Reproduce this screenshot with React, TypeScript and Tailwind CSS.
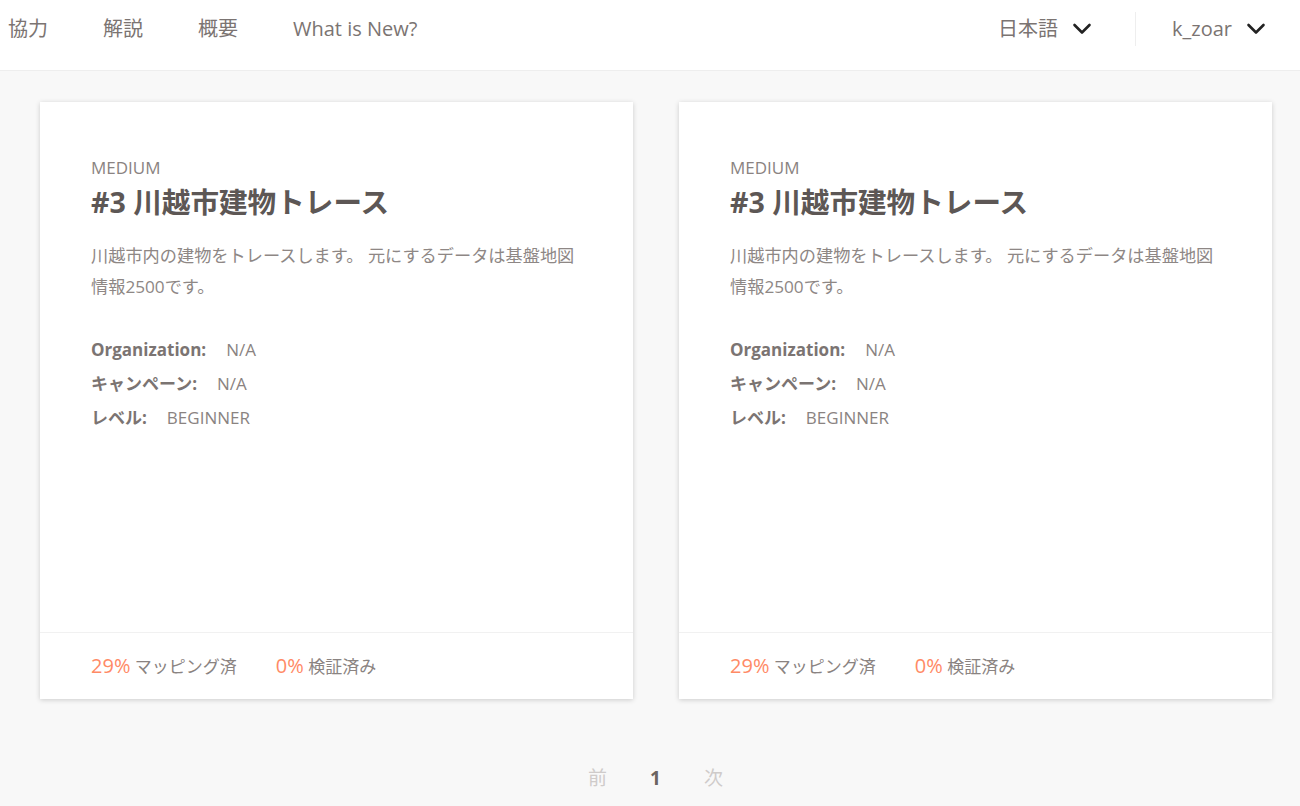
import React from "react";

const FONT = "font-['Open_Sans','Noto_Sans_CJK_JP',sans-serif]";

type Project = {
  id: number;
  difficulty: string;
  title: string;
  desc: string;
  org: string;
  campaign: string;
  level: string;
  mapped: number;
  validated: number;
};

const projects: Project[] = [
  {
    id: 1,
    difficulty: "MEDIUM",
    title: "#3 川越市建物トレース",
    desc: "川越市内の建物をトレースします。 元にするデータは基盤地図情報2500です。",
    org: "N/A",
    campaign: "N/A",
    level: "BEGINNER",
    mapped: 29,
    validated: 0,
  },
  {
    id: 2,
    difficulty: "MEDIUM",
    title: "#3 川越市建物トレース",
    desc: "川越市内の建物をトレースします。 元にするデータは基盤地図情報2500です。",
    org: "N/A",
    campaign: "N/A",
    level: "BEGINNER",
    mapped: 29,
    validated: 0,
  },
];

function Chevron() {
  return (
    <svg width="24" height="24" viewBox="0 0 24 24" fill="none" stroke="#222" strokeWidth="2.6" strokeLinecap="round" strokeLinejoin="round">
      <path d="M4.5 8l7.5 7.5 7.5-7.5" />
    </svg>
  );
}

function ProjectCard({ p }: { p: Project }) {
  return (
    <div className="w-[593px] h-[597px] bg-white shadow-[0_1px_5px_rgba(0,0,0,0.18)] flex flex-col">
      <div className="flex-1 px-[51px] pt-[54px]">
        <div className="text-[17px] leading-[24px] text-[#8a8381]">{p.difficulty}</div>
        <h3 className="mt-[3px] text-[28.6px] leading-[38px] font-bold text-[#5d5755]">{p.title}</h3>
        <p className="mt-[19px] text-[17.2px] leading-[31px] text-[#8e8785] pr-[4px]">{p.desc}</p>
        <div className="mt-[35px] flex flex-col gap-[9px] text-[17px] leading-[25px] text-[#8a8381]">
          <div>
            <span className="font-bold text-[#7b7472]">Organization:</span>
            <span className="ml-[20px]">{p.org}</span>
          </div>
          <div>
            <span className="font-bold text-[#7b7472]">キャンペーン:</span>
            <span className="ml-[20px]">{p.campaign}</span>
          </div>
          <div>
            <span className="font-bold text-[#7b7472]">レベル:</span>
            <span className="ml-[20px]">{p.level}</span>
          </div>
        </div>
      </div>
      <div className="h-[67px] border-t border-[#f1f1f1] px-[51px] flex items-center gap-[39px] text-[17px] text-[#8a8381]">
        <div>
          <span className="text-[20px] text-[#ff8a66]">{p.mapped}%</span> マッピング済
        </div>
        <div>
          <span className="text-[20px] text-[#ff8a66]">{p.validated}%</span> 検証済み
        </div>
      </div>
    </div>
  );
}

export default function App() {
  return (
    <div className={`${FONT} min-h-[806px] bg-[#f8f8f8]`}>
      {/* top nav */}
      <header className="h-[71px] bg-white border-b border-[#eeeeee] flex items-center justify-between pb-[12px] pl-[8px] pr-[32px]">
        <nav className="flex items-center gap-[55px] text-[20px] text-[#7b7472]">
          <a>協力</a>
          <a>解説</a>
          <a>概要</a>
          <a>What is New?</a>
        </nav>
        <div className="flex items-center text-[20px] text-[#7b7472]">
          <button className="flex items-center gap-[12px]">
            日本語 <Chevron />
          </button>
          <div className="w-px h-[34px] bg-[#eeeeee] ml-[41px] mr-[36px]" />
          <button className="flex items-center gap-[12px]">
            k_zoar <Chevron />
          </button>
        </div>
      </header>

      {/* project cards */}
      <main className="pl-[40px] pt-[31px] flex gap-[46px]">
        {projects.map((p) => (
          <ProjectCard key={p.id} p={p} />
        ))}
      </main>

      {/* pagination */}
      <div className="mt-[65px] flex justify-center items-center gap-[43px] text-[19px] pl-[11px]">
        <span className="text-[#cfcbca]">前</span>
        <span className="font-bold text-[#6b6461]">1</span>
        <span className="text-[#cfcbca]">次</span>
      </div>
    </div>
  );
}
